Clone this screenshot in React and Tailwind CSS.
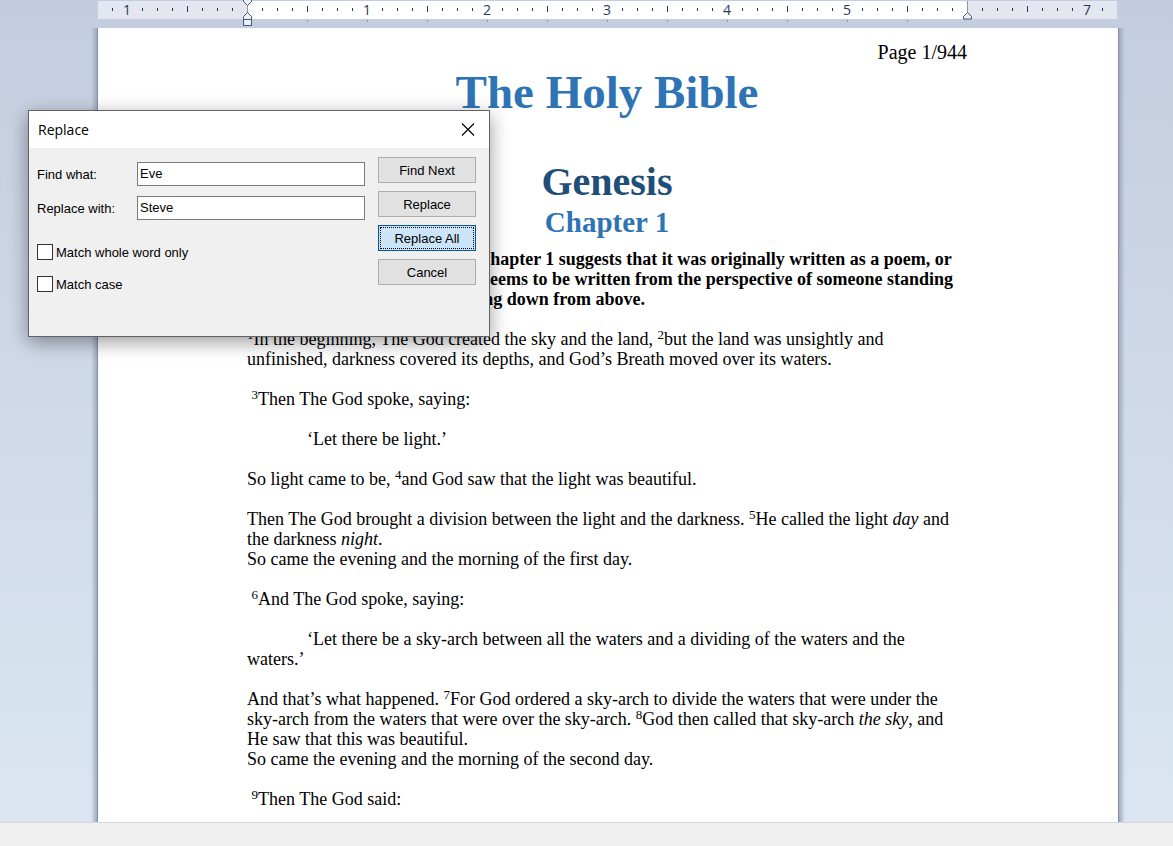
import React from "react";

const TICKS = Array.from({ length: 67 }, (_, i) => i - 9);
const TABS = Array.from({ length: 11 }, (_, i) => 209 + i * 60);

function Ruler() {
  return (
    <svg className="block h-7 w-full shrink-0" aria-label="Ruler" shapeRendering="crispEdges">
      <rect x="0" y="1" width="1019" height="18" fill="#e4e7f0" />
      <rect x="149" y="1" width="720" height="18" fill="#ffffff" />
      {TICKS.filter((k) => k % 8 !== 0).map((k) => {
        const x = 149 + k * 15;
        return k % 4 === 0 ? (
          <rect key={k} x={x} y="6" width="1" height="6" fill="#1f3a5f" />
        ) : (
          <rect key={k} x={x} y="8" width="1" height="3" fill="#1f3a5f" />
        );
      })}
      {[-1, 1, 2, 3, 4, 5, 7].map((n) => (
        <text
          key={n}
          x={149 + n * 120}
          y="15"
          textAnchor="middle"
          fill="#1f3a5f"
          className="font-['Open_Sans',sans-serif] text-[14px]"
        >
          {Math.abs(n)}
        </text>
      ))}
      {TABS.map((x) => (
        <rect key={x} x={x} y="20" width="1" height="2" fill="#8a96ab" />
      ))}
      <rect x="149" y="1" width="1" height="14" fill="#8a96ab" />
      <rect x="869" y="1" width="1" height="14" fill="#8a96ab" />
      <g shapeRendering="auto" stroke="#3f5878" fill="#eef1f7">
        <path d="M145.5 -1V1.5L149.5 5.5L153.5 1.5V-1Z" />
        <path d="M145.5 19.5V16.5L149.5 12.5L153.5 16.5V19.5Z" />
        <path d="M145.5 19.5H153.5V25.5H145.5Z" />
        <path d="M865.5 19V16.5L869.5 12.5L873.5 16.5V19Z" />
      </g>
    </svg>
  );
}

function V({ children }) {
  return <sup className="text-[13px]">{children}</sup>;
}

function P({ children, className = "" }) {
  return <p className={`mb-5 ${className}`}>{children}</p>;
}

function Document() {
  return (
    <article className="min-h-0 flex-1 overflow-hidden border-x border-[#8290a8] bg-white pr-[151px] pl-[149px] pt-3 font-['Liberation_Serif',serif] text-[18px] leading-5 text-black">
      <div className="text-right text-[20px] leading-6">Page 1/944</div>
      <h1 className="text-center text-[47px] leading-[56px] font-bold text-[#2e74b5]">The Holy Bible</h1>
      <h2 className="mt-[38px] text-center text-[40px] leading-[48px] font-bold text-[#1f4e79]">Genesis</h2>
      <h3 className="mb-[11px] text-center text-[29px] leading-8 font-bold text-[#2e74b5]">Chapter 1</h3>
      <P className="font-bold">
        The Hebrew layout of Genesis chapter 1 suggests that it was originally written as a poem, or
        <br />
        perhaps even a song, and it all seems to be written from the perspective of someone standing
        <br />
        on this world rather than looking down from above.
      </P>
      <P>
        <V>1</V>In the beginning, The God created the sky and the land, <V>2</V>but the land was unsightly and
        <br />
        unfinished, darkness covered its depths, and God’s Breath moved over its waters.
      </P>
      <P>
        &nbsp;<V>3</V>Then The God spoke, saying:
      </P>
      <P className="indent-[60px]">‘Let there be light.’</P>
      <P>
        So light came to be, <V>4</V>and God saw that the light was beautiful.
      </P>
      <P>
        Then The God brought a division between the light and the darkness. <V>5</V>He called the light <i>day</i> and
        <br />
        the darkness <i>night</i>.
        <br />
        So came the evening and the morning of the first day.
      </P>
      <P>
        &nbsp;<V>6</V>And The God spoke, saying:
      </P>
      <P className="indent-[60px]">
        ‘Let there be a sky-arch between all the waters and a dividing of the waters and the
        <br />
        waters.’
      </P>
      <P>
        And that’s what happened. <V>7</V>For God ordered a sky-arch to divide the waters that were under the
        <br />
        sky-arch from the waters that were over the sky-arch. <V>8</V>God then called that sky-arch <i>the sky</i>, and
        <br />
        He saw that this was beautiful.
        <br />
        So came the evening and the morning of the second day.
      </P>
      <P>
        &nbsp;<V>9</V>Then The God said:
      </P>
    </article>
  );
}

const BTN = "h-[26px] border border-[#adadad] bg-[#e1e1e1] pt-0.5";

function Field({ id, label, value }) {
  return (
    <div className="flex h-6 items-center">
      <label htmlFor={id} className="w-[100px] pt-0.5">{label}</label>
      <input
        id={id}
        type="text"
        defaultValue={value}
        className="h-6 min-w-0 flex-1 border border-[#7a7a7a] bg-white px-0.5 pb-0.5 outline-none"
      />
    </div>
  );
}

function Check({ label }) {
  return (
    <label className="flex h-4 items-center gap-[3px]">
      <input type="checkbox" className="size-4 appearance-none border border-[#333333] bg-white checked:bg-[#0078d7]" />
      <span className="pt-0.5">{label}</span>
    </label>
  );
}

function ReplaceDialog() {
  return (
    <div
      role="dialog"
      aria-label="Replace"
      className="absolute top-[110px] left-7 w-[462px] border border-[#606266] bg-[#f0f0f0] font-['Liberation_Sans',sans-serif] text-[13px] leading-4 text-black shadow-[0_5px_18px_rgba(0,0,0,0.4)]"
    >
      <header className="flex h-[37px] items-center justify-between bg-white pr-[14px] pl-[9px]">
        <h2 className="font-['Open_Sans',sans-serif] text-[14px]">Replace</h2>
        <button type="button" aria-label="Close">
          <svg className="block size-[14px]" viewBox="0 0 14 14" fill="none" stroke="#000000" strokeWidth="1.1">
            <path d="M1 0.5L13 12.5M13 0.5L1 12.5" />
          </svg>
        </button>
      </header>
      <div className="flex gap-[13px] pt-[9px] pr-[13px] pb-11 pl-2">
        <div className="flex flex-1 flex-col pt-[5px]">
          <div className="flex flex-col gap-2.5">
            <Field id="find" label="Find what:" value="Eve" />
            <Field id="with" label="Replace with:" value="Steve" />
          </div>
          <div className="mt-6 flex flex-col gap-4">
            <Check label="Match whole word only" />
            <Check label="Match case" />
          </div>
        </div>
        <div className="flex w-[98px] flex-col gap-2">
          <button type="button" className={BTN}>Find Next</button>
          <button type="button" className={BTN}>Replace</button>
          <button type="button" className="h-[26px] border border-[#005499] bg-[#cce4f7] p-px">
            <span className="flex h-full items-center justify-center border border-dotted border-black pt-0.5">Replace All</span>
          </button>
          <button type="button" className={BTN}>Cancel</button>
        </div>
      </div>
    </div>
  );
}

export default function App() {
  return (
    <div className="relative flex h-screen flex-col overflow-hidden bg-[#f0f0f0]">
      <main className="flex min-h-0 flex-1 flex-col bg-linear-to-b from-[#c4cddf] to-[#dbe6f2]">
        <div className="mr-[55px] ml-[98px] shrink-0">
          <Ruler />
        </div>
        <div className="mr-[48px] ml-[91px] flex min-h-0 flex-1">
          <div className="w-1.5 bg-linear-to-r from-transparent to-[#9daac0]" />
          <Document />
          <div className="w-1.5 bg-linear-to-l from-transparent to-[#9daac0]" />
        </div>
      </main>
      <footer className="h-6 shrink-0 border-t border-[#d7d7d7] bg-[#f0f0f0]" />
      <ReplaceDialog />
    </div>
  );
}
